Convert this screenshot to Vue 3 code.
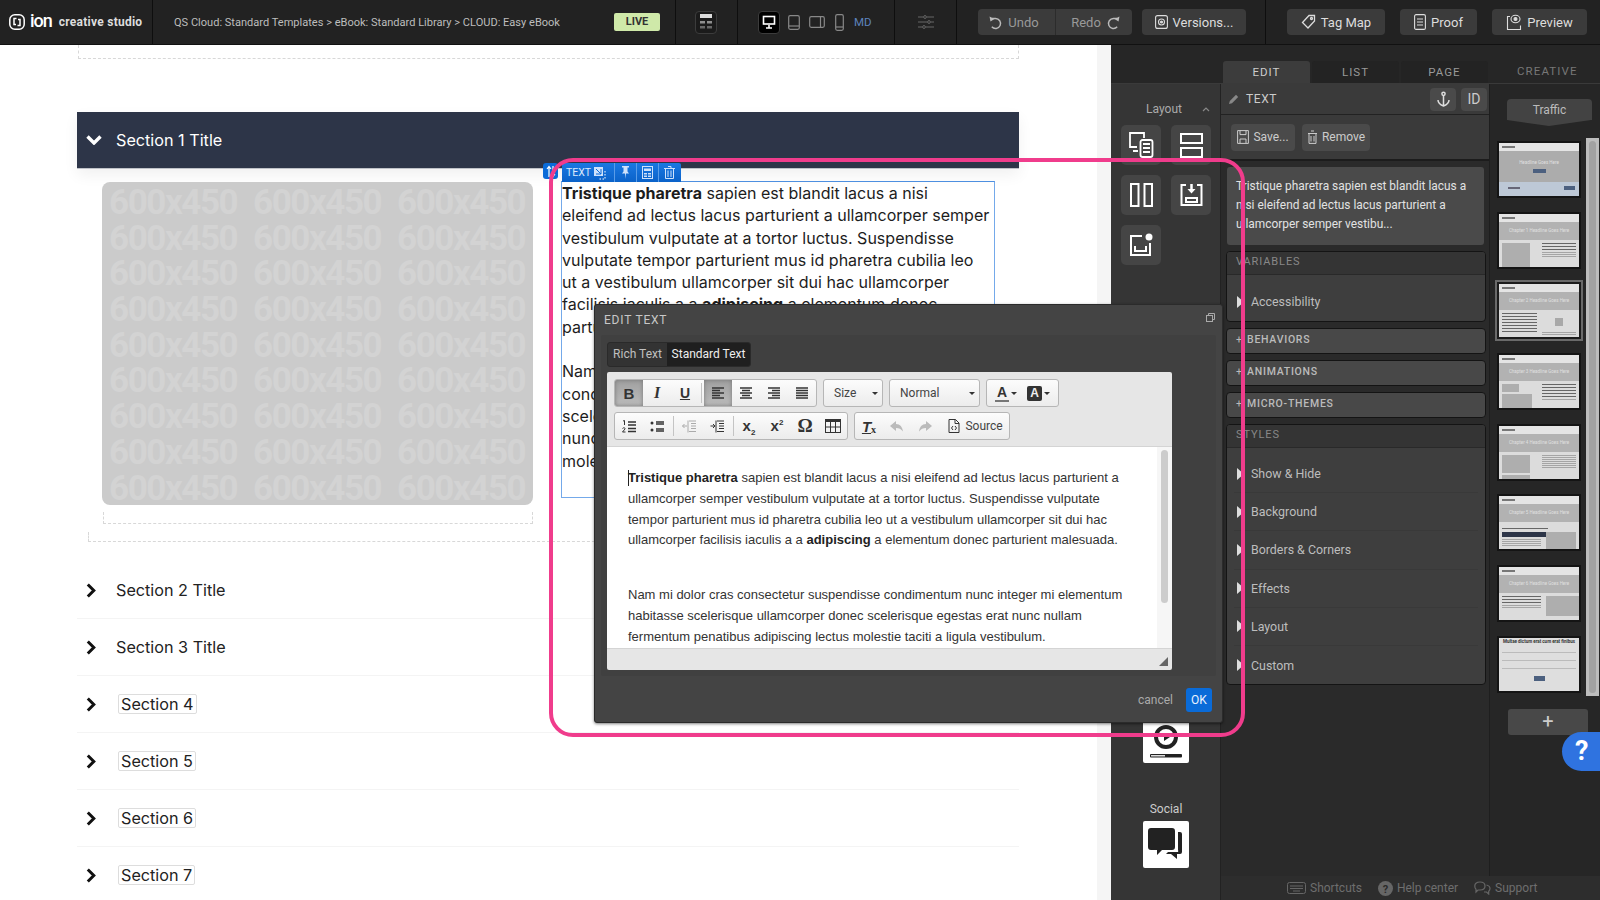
<script setup>
const sections = [
  { label: 'Section 2 Title', boxed: false },
  { label: 'Section 3 Title', boxed: false },
  { label: 'Section 4', boxed: true },
  { label: 'Section 5', boxed: true },
  { label: 'Section 6', boxed: true },
  { label: 'Section 7', boxed: true },
]
const watermarks = Array.from({ length: 27 }, (_, i) => i)
const collapsed = ['BEHAVIORS', 'ANIMATIONS', 'MICRO-THEMES']
const styleRows = ['Show & Hide', 'Background', 'Borders & Corners', 'Effects', 'Layout', 'Custom']
const thumbs = [
  { kind: 'cover', head: 'Headline Goes Here', left: [], right: [] },
  { kind: '', head: 'Chapter 1 Headline Goes Here', left: [{ t: 'img', w: 28, h: 24 }], right: [{ t: 'bold', n: 3 }, { t: 'line', n: 3 }] },
  { kind: 'sel', head: 'Chapter 2 Headline Goes Here', left: [{ t: 'bold', n: 7 }], right: [{ t: 'sq', w: 8, h: 8 }, { t: 'line', n: 2 }] },
  { kind: '', head: 'Chapter 3 Headline Goes Here', left: [{ t: 'img', w: 17, h: 8 }, { t: 'img', w: 30, h: 17 }], right: [{ t: 'bold', n: 5 }, { t: 'line', n: 1 }] },
  { kind: '', head: 'Chapter 4 Headline Goes Here', left: [{ t: 'img', w: 28, h: 18 }, { t: 'img', w: 28, h: 9 }], right: [{ t: 'line', n: 7 }] },
  { kind: 'wide', head: 'Chapter 5 Headline Goes Here', intro: true, left: [{ t: 'bar', w: 44, h: 5 }, { t: 'line', n: 4 }], right: [{ t: 'img', w: 30, h: 20 }] },
  { kind: 'wide', head: 'Chapter 6 Headline Goes Here', left: [{ t: 'bold', n: 3 }, { t: 'line', n: 2 }], right: [{ t: 'img', w: 36, h: 20 }] },
  { kind: 'form', head: '', left: [], right: [] },
]
const aligns = [
  { key: 'left', active: true, lines: [[1, 13], [1, 9], [1, 13], [1, 9], [1, 13]] },
  { key: 'center', active: false, lines: [[1, 13], [3, 11], [1, 13], [3, 11], [1, 13]] },
  { key: 'right', active: false, lines: [[1, 13], [5, 13], [1, 13], [5, 13], [1, 13]] },
  { key: 'justify', active: false, lines: [[1, 13], [1, 13], [1, 13], [1, 13], [1, 13]] },
]
const blockSize = (p) => ({ width: p.w + 'px', height: p.h + 'px' })
</script>

<template>
  <div class="app">
    <header class="topbar">
      <div class="brand">
        <svg class="logo" width="16" height="16" viewBox="0 0 16 16" fill="none" stroke="#fff" stroke-width="1.5"><rect x=".8" y=".8" width="14.4" height="14.400" rx="5"/><path d="M7.500 4.500H5v6h2M8.500 11.500H11v-6H9"/></svg>
        <span class="ion">ion</span>
        <span class="studio">creative studio</span>
      </div>
      <div class="crumbs">QS Cloud: Standard Templates &gt; eBook: Standard Library &gt; CLOUD: Easy eBook</div>
      <span class="live">LIVE</span>
      <div class="cell layout-cell">
        <span class="icon-box"><svg width="14" height="18" viewBox="0 0 14 18" fill="#ddd"><rect x="1" y="1" width="12" height="4"/><rect x="1" y="8" width="5" height="2.5" opacity=".6"/><rect x="8" y="8" width="5" height="2.5" opacity=".6"/><rect x="1" y="13" width="5" height="2.5" opacity=".4"/><rect x="8" y="13" width="5" height="2.5" opacity=".4"/></svg></span>
      </div>
      <div class="cell devices">
        <span class="icon-box black"><svg width="14" height="14" viewBox="0 0 14 14" fill="none" stroke="#fff" stroke-width="1.6"><rect x="1.500" y="1.500" width="11" height="7.500"/><path d="M7 10v2.500M4 13h6"/></svg></span>
        <svg class="dev t" width="12" height="15" viewBox="0 0 12 15" fill="none" stroke="#888" stroke-width="1.2"><rect x=".7" y=".7" width="10.6" height="13.6" rx="1.5"/><path d="M1 11h10" /></svg>
        <svg class="dev l" width="16" height="12" viewBox="0 0 16 12" fill="none" stroke="#888" stroke-width="1.2"><rect x=".7" y=".7" width="14.600" height="10.600" rx="1.5"/><path d="M11.500 1v10"/></svg>
        <svg class="dev p" width="9" height="17" viewBox="0 0 9 17" fill="none" stroke="#888" stroke-width="1.2"><rect x=".7" y=".7" width="7.6" height="15.6" rx="1.5"/><path d="M1 13h7"/></svg>
        <span class="md">MD</span>
      </div>
      <div class="cell sliders">
        <svg width="16" height="16" viewBox="0 0 16 16" fill="none" stroke="#666" stroke-width="1"><path d="M0 3h5M9 3h7M0 8h9M13 8h3M0 13h4M8 13h8"/><circle cx="7" cy="3" r="1.4"/><circle cx="11" cy="8" r="1.4"/><circle cx="6" cy="13" r="1.4"/></svg>
      </div>
      <div class="cell history">
        <div class="btn-group">
          <span class="tbtn dim undo"><svg width="15" height="15" viewBox="0 0 15 15" fill="none" stroke="#bbb" stroke-width="1.4"><path d="M4 3.5h3.5a5 5 0 1 1-3.700 8.300"/><path d="M1.500 1.500l1 5 4-2.500z" fill="#bbb" stroke="none"/></svg>Undo</span>
          <span class="tbtn dim redo">Redo<svg width="15" height="15" viewBox="0 0 15 15" fill="none" stroke="#bbb" stroke-width="1.4"><path d="M11 3.5H7.500a5 5 0 1 0 3.700 8.300"/><path d="M13.500 1.500l-1 5-4-2.500z" fill="#bbb" stroke="none"/></svg></span>
        </div>
        <span class="tbtn versions"><svg width="13" height="14" viewBox="0 0 13 14" fill="none" stroke="#ddd" stroke-width="1.1"><rect x=".6" y=".6" width="11.8" height="12.8" rx="2"/><circle cx="6.5" cy="7" r="3"/><circle cx="6.5" cy="7" r="1" fill="#ddd"/></svg>Versions...</span>
      </div>
      <div class="actions">
        <span class="tbtn tag"><svg width="15" height="16" viewBox="0 0 15 16" fill="none" stroke="#ddd" stroke-width="1.3"><path d="M8 1.500h5.500V7L7 14 1.500 8.500z"/><circle cx="10.500" cy="4.500" r="1"/></svg>Tag Map</span>
        <span class="tbtn proof"><svg width="12" height="16" viewBox="0 0 12 16" fill="none" stroke="#ddd" stroke-width="1.1"><rect x=".6" y=".6" width="10.8" height="14.8" rx="1.5"/><path d="M3 5h6M3 8h6M3 11h6"/></svg>Proof</span>
        <span class="tbtn preview"><svg width="16" height="17" viewBox="0 0 16 17" fill="none" stroke="#ddd" stroke-width="1.1"><path d="M4 2.500H1.500v13h13v-4"/><ellipse cx="9.500" cy="5" rx="4.500" ry="3.700"/><circle cx="9.500" cy="5" r="1.500" fill="#ddd"/></svg>Preview</span>
      </div>
    </header>

    <div class="workspace">
      <main class="canvas">
        <div class="dash-top"></div>
        <div class="acc-open">
          <svg width="16" height="10" viewBox="0 0 16 10" fill="none" stroke="#fff" stroke-width="3.4"><path d="M1.500 1.500L8 8l6.500-6.500"/></svg>
          <span>Section 1 Title</span>
        </div>
        <div class="acc-body">
          <div class="acc-cols">
            <div class="media-col">
              <div class="placeholder">
                <span v-for="n in watermarks" :key="n">600x450</span>
              </div>
              <div class="dash-tick"></div>
            </div>
            <div class="rich">
              <p><b>Tristique pharetra</b> sapien est blandit lacus a nisi eleifend ad lectus lacus parturient a ullamcorper semper vestibulum vulputate at a tortor luctus. Suspendisse vulputate tempor parturient mus id pharetra cubilia leo ut a vestibulum ullamcorper sit dui hac ullamcorper facilisis iaculis a a <b>adipiscing</b> a elementum donec parturient malesuada.</p>
              <p>Nam mi dolor cras consectetur suspendisse condimentum nunc integer mi elementum habitasse scelerisque ullamcorper donec scelerisque egestas erat nunc nullam fermentum penatibus adipiscing lectus molestie taciti a ligula vestibulum.</p>
            </div>
          </div>
          <div class="dash-wide"></div>
        </div>
        <div v-for="s in sections" :key="s.label" class="acc-row">
          <svg width="10" height="15" viewBox="0 0 10 15" fill="none" stroke="#111" stroke-width="3"><path d="M1.800 1.500l6 6-6 6"/></svg>
          <span :class="{ boxed: s.boxed }">{{ s.label }}</span>
        </div>
      </main>
      <div class="gutter"></div>

      <aside class="side">
        <nav class="tabs">
          <span class="tab on">EDIT</span>
          <span class="tab">LIST</span>
          <span class="tab">PAGE</span>
          <span class="tab-plain">CREATIVE</span>
        </nav>
        <div class="side-body">
          <div class="tools">
            <div class="tools-head"><span>Layout</span><svg width="8" height="5" viewBox="0 0 8 5" fill="none" stroke="#888" stroke-width="1.2"><path d="M1 4l3-3 3 3"/></svg></div>
            <div class="tool-grid">
              <span class="tool"><svg width="25" height="26" viewBox="0 0 25 26" fill="none" stroke="#fff" stroke-width="1.800"><path d="M15 6V1H1v14h7M4 19h5"/><rect x="11.500" y="8" width="12" height="17" rx="2"/><path d="M14 12h7M14 16h7M14 20h7" stroke-width="2.200"/></svg></span>
              <span class="tool"><svg width="23" height="25" viewBox="0 0 23 25" fill="none" stroke="#fff" stroke-width="2"><rect x="1" y="1" width="21" height="9"/><rect x="1" y="15" width="21" height="9"/></svg></span>
              <span class="tool"><svg width="23" height="24" viewBox="0 0 23 24" fill="none" stroke="#fff" stroke-width="2"><rect x="1" y="1" width="7.500" height="22"/><rect x="14.500" y="1" width="7.500" height="22"/></svg></span>
              <span class="tool"><svg width="23" height="24" viewBox="0 0 23 24" fill="none" stroke="#fff" stroke-width="2"><path d="M6 2H1.500v20h20V2H17"/><rect x="6" y="15" width="11" height="4"/><path d="M11.500 1v6" stroke-width="2.500"/><path d="M7.500 6l4 4.500 4-4.500z" fill="#fff" stroke="none"/></svg></span>
              <span class="tool"><svg width="24" height="24" viewBox="0 0 24 24" fill="none" stroke="#fff" stroke-width="2"><path d="M13 3H2v19h19V10"/><path d="M6 13v5h11v-5" /><circle cx="20" cy="4" r="3.500" fill="#fff" stroke="none"/></svg></span>
            </div>
            <div class="media-wrap">
              <span class="white-tool media"><svg width="36" height="44" viewBox="0 0 36 44" fill="none" stroke="#222"><circle cx="18" cy="19" r="10" stroke-width="4"/><path d="M16 15l6 4-6 4z" fill="#222" stroke="none"/><rect x="2" y="36" width="32" height="3.500" rx="1" fill="#222" stroke-width="0"/><rect x="3" y="37" width="14" height="1.500" fill="#ddd" stroke="none"/></svg></span>
              <span class="social-label">Social</span>
              <span class="white-tool"><svg width="36" height="36" viewBox="0 0 36 36" fill="#222"><path d="M3 1h21a3 3 0 0 1 3 3v16a3 3 0 0 1-3 3H14l-5 5v-5H3a3 3 0 0 1-3-3V4a3 3 0 0 1 3-3z"/><path d="M30 5h2a2 2 0 0 1 2 2v18a2 2 0 0 1-2 2h-3v5l-6-5h-5l2-2h10a2 2 0 0 0 0-2z"/></svg></span>
            </div>
          </div>

          <div class="rest">
            <div class="rest-main">
              <section class="edit">
                <div class="edit-head">
                  <svg width="12" height="12" viewBox="0 0 12 12" fill="#888"><path d="M1 11l.8-3L8 1.800 10.200 4 4 10.200z"/></svg>
                  <span class="edit-title">TEXT</span>
                  <span class="square"><svg width="13" height="16" viewBox="0 0 13 16" fill="none" stroke="#ddd" stroke-width="1.5"><circle cx="6.500" cy="2.800" r="1.600"/><path d="M6.500 4.500V15M1 9c0 3.500 3 5 5.500 6 2.500-1 5.500-2.500 5.500-6"/></svg></span>
                  <span class="square id">ID</span>
                </div>
                <div class="edit-actions">
                  <span class="small-btn save"><svg width="12" height="14" viewBox="0 0 12 14" fill="none" stroke="#ccc" stroke-width="1"><path d="M.6.6h10.800v12.800H.6z"/><path d="M3 .6v4h6v-4M3 13V9h6v4"/></svg>Save...</span>
                  <span class="small-btn remove"><svg width="11" height="14" viewBox="0 0 11 14" fill="none" stroke="#ccc" stroke-width="1"><path d="M1 3.500h9M2 3.500v9.900h7V3.500M4 1h3M4 6v5.500M7 6v5.500"/></svg>Remove</span>
                </div>
                <div class="excerpt">Tristique pharetra sapien est blandit lacus a nisi eleifend ad lectus lacus parturient a ullamcorper semper vestibu...</div>
                <div class="panel vars">
                  <div class="panel-head">VARIABLES</div>
                  <div class="row"><i></i>Accessibility</div>
                </div>
                <div v-for="c in collapsed" :key="c" class="collapsed"><b>+</b>{{ c }}</div>
                <div class="panel styles">
                  <div class="panel-head">STYLES</div>
                  <div v-for="r in styleRows" :key="r" class="row"><i></i>{{ r }}</div>
                </div>
              </section>

              <section class="pages">
                <div class="traffic">Traffic</div>
                <div class="thumb-area">
                  <div class="thumb-list">
                    <div v-for="(t, i) in thumbs" :key="i" class="thumb" :class="t.kind">
                      <div class="th-top"><s></s></div>
                      <div v-if="t.head" class="th-hero"><span>{{ t.head }}</span><em v-if="t.kind === 'cover'"></em></div>
                      <template v-if="t.kind === 'cover'">
                        <div class="th-band"><u></u><em></em></div>
                      </template>
                      <template v-else-if="t.kind === 'form'">
                        <div class="th-form">
                          <span class="form-title">Multae dictum erat cum erat finibus</span>
                          <u></u><u></u><u></u>
                          <em></em>
                        </div>
                      </template>
                      <template v-else>
                        <div v-if="t.intro" class="th-intro"></div>
                        <div class="th-body">
                          <div class="th-col">
                            <template v-for="(p, pi) in t.left" :key="pi">
                              <div v-if="p.n" class="th-lines" :class="p.t"><u v-for="k in p.n" :key="k"></u></div>
                              <div v-else class="th-block" :class="p.t" :style="blockSize(p)"></div>
                            </template>
                          </div>
                          <div class="th-col">
                            <template v-for="(p, pi) in t.right" :key="pi">
                              <div v-if="p.n" class="th-lines" :class="p.t"><u v-for="k in p.n" :key="k"></u></div>
                              <div v-else class="th-block" :class="p.t" :style="blockSize(p)"></div>
                            </template>
                          </div>
                        </div>
                      </template>
                    </div>
                  </div>
                  <div class="track"><span></span></div>
                </div>
                <div class="plus">+</div>
              </section>
            </div>
            <footer class="foot">
              <span><svg width="19" height="12" viewBox="0 0 19 12" fill="none" stroke="#666" stroke-width="1"><rect x=".5" y=".5" width="18" height="11" rx="2"/><path d="M3 4h13M3 6.500h13M6 9h7"/></svg>Shortcuts</span>
              <span><svg width="15" height="15" viewBox="0 0 15 15"><circle cx="7.500" cy="7.500" r="7.500" fill="#666"/><text x="7.500" y="11.500" text-anchor="middle" font-size="11" font-weight="700" fill="#2a2a2a" font-family="Roboto">?</text></svg>Help center</span>
              <span><svg width="17" height="14" viewBox="0 0 17 14" fill="none" stroke="#666" stroke-width="1.200"><path d="M6 1c3 0 5 1.600 5 4s-2 4-5 4H4L2 11V8.300C1 7.500.8 6.300.8 5 .8 2.600 3 1 6 1z"/><path d="M12.500 4c2 .5 3.500 1.800 3.500 3.500 0 1.200-.5 2-1.300 2.700V13l-2.200-2H10"/></svg>Support</span>
            </footer>
          </div>
        </div>
      </aside>
    </div>

    <!-- Element toolbar above the selected text block -->
    <div class="el-handle"><svg width="10" height="13" viewBox="0 0 10 13" fill="none" stroke="#fff" stroke-width="1.200"><path d="M3 12V2M1 4l2-2.500L5 4M7 1v10M5 9l2 2.500L9 9"/></svg></div>
    <div class="el-bar">
      <span class="el-name">TEXT <svg width="13" height="14" viewBox="0 0 13 14"><rect x="1" y="1" width="9" height="9" fill="#cfe2fb"/><path d="M3 3l5 5M8 3v5H3" stroke="#0a6bd8" fill="none"/><path d="M12 5v8H5" stroke="#fff" stroke-dasharray="1.500 1.500" fill="none"/></svg></span>
      <span class="el-ic"><svg width="9" height="13" viewBox="0 0 9 13" fill="#cfe2fb"><path d="M1 0h7v1.500H6.500v4L8 7.500H5L4.500 13 4 7.500H1l1.500-2v-4H1z"/></svg></span>
      <span class="el-ic"><svg width="11" height="13" viewBox="0 0 11 13"><rect x=".5" y=".5" width="10" height="12" fill="none" stroke="#cfe2fb"/><path d="M2 2.500h7v2.500H2zM2 7h3v1.500H2zM6 7h3v1.500H6zM2 9.500h3V11H2zM6 9.500h3V11H6z" fill="#cfe2fb"/></svg></span>
      <span class="el-ic"><svg width="11" height="13" viewBox="0 0 11 13" fill="none" stroke="#cfe2fb"><path d="M0 2.500h11M1.500 2.500v10h8v-10M4 .5h3v2M4 4.500v6.500M7 4.500v6.500"/></svg></span>
    </div>

    <!-- Edit text dialog -->
    <div class="modal">
      <div class="modal-head">
        <span>EDIT TEXT</span>
        <svg width="9" height="9" viewBox="0 0 9 9" fill="none" stroke="#aaa"><rect x=".5" y="2.500" width="6" height="6"/><path d="M2.500 2.500v-2h6v6h-2"/></svg>
      </div>
      <div class="modal-inner">
        <div class="mode-tabs"><span>Rich Text</span><span class="on">Standard Text</span></div>
        <div class="editor">
          <div class="toolbar">
            <div class="tb-row">
              <div class="tb-group">
                <span class="c pressed"><b>B</b></span>
                <span class="c"><b class="ital">I</b></span>
                <span class="c"><b class="und">U</b></span>
                <span class="sep"></span>
                <span v-for="a in aligns" :key="a.key" class="c" :class="{ pressed: a.active }">
                  <svg width="14" height="12" viewBox="0 0 14 12" stroke="#333" stroke-width="1.400"><line v-for="(l, i) in a.lines" :key="i" :x1="l[0]" :x2="l[1]" :y1="1 + i * 2.500" :y2="1 + i * 2.500"/></svg>
                </span>
              </div>
              <div class="tb-group combo size"><span>Size</span><i></i></div>
              <div class="tb-group combo normal"><span>Normal</span><i></i></div>
              <div class="tb-group colors">
                <span class="color-a"><b>A</b><i></i></span>
                <span class="color-b"><b>A</b><i></i></span>
              </div>
            </div>
            <div class="tb-row">
              <div class="tb-group">
                <span class="c"><svg width="14" height="13" viewBox="0 0 14 13" stroke="#333" stroke-width="1.400" fill="none"><path d="M6 2h8M6 5h8M6 8.500h8M6 11.500h8"/><path d="M1 1l1.500-.5V5M.5 8.500c.5-1 3-1 2.500.5L.5 12H3.500" stroke-width="1"/></svg></span>
                <span class="c"><svg width="14" height="13" viewBox="0 0 14 13" stroke="#333" stroke-width="1.500" fill="#333"><circle cx="2" cy="3" r="1.500" stroke="none"/><circle cx="2" cy="10" r="1.500" stroke="none"/><path d="M6 2h8M6 4h8M6 9h8M6 11h8" fill="none"/></svg></span>
                <span class="sep wide"></span>
                <span class="c"><svg width="14" height="13" viewBox="0 0 14 13" stroke="#aaa" fill="none"><path d="M7 1h7M9 3.500h5M9 6h5M9 8.500h5M7 11.500h7M6 .5v12M5 6H.5M2.500 4L.5 6l2 2"/></svg></span>
                <span class="c"><svg width="14" height="13" viewBox="0 0 14 13" stroke="#333" fill="none"><path d="M7 1h7M9 3.500h5M9 6h5M9 8.500h5M7 11.500h7M6 .5v12M.5 6H5M3 4l2 2-2 2"/></svg></span>
                <span class="sep wide"></span>
                <span class="c script"><span>x<sub>2</sub></span></span>
                <span class="c script"><span>x<sup>2</sup></span></span>
                <span class="c omega">&#937;</span>
                <span class="c"><svg width="16" height="14" viewBox="0 0 16 14"><rect x=".5" y=".5" width="15" height="13" fill="none" stroke="#333"/><rect y="0" width="16" height="3" fill="#333"/><path d="M5.500 3v10M10.500 3v10M0 8h16" stroke="#333"/></svg></span>
              </div>
              <div class="tb-group">
                <span class="c clear"><b>T</b><small>x</small></span>
                <span class="c"><svg width="14" height="11" viewBox="0 0 14 11" fill="#bbb"><path d="M6 0L0 5l6 5V7c3 0 5 1 7 3.500C12.500 6 10 3 6 3z"/></svg></span>
                <span class="c"><svg width="14" height="11" viewBox="0 0 14 11" fill="#bbb"><path d="M8 0l6 5-6 5V7C5 7 3 8 1 10.500 1.500 6 4 3 8 3z"/></svg></span>
                <span class="source"><svg width="12" height="14" viewBox="0 0 12 14" fill="none" stroke="#333"><path d="M1 .5h6.500L11 4v9.500H1z"/><path d="M7 .5V4.500h4M5 7L3.500 9 5 11M7 7l1.500 2L7 11"/></svg>Source</span>
              </div>
            </div>
          </div>
          <div class="doc">
            <div class="doc-text">
              <p><span class="caret"></span><b>Tristique pharetra</b> sapien est blandit lacus a nisi eleifend ad lectus lacus parturient a ullamcorper semper vestibulum vulputate at a tortor luctus. Suspendisse vulputate tempor parturient mus id pharetra cubilia leo ut a vestibulum ullamcorper sit dui hac ullamcorper facilisis iaculis a a <b>adipiscing</b> a elementum donec parturient malesuada.</p>
              <p>Nam mi dolor cras consectetur suspendisse condimentum nunc integer mi elementum habitasse scelerisque ullamcorper donec scelerisque egestas erat nunc nullam fermentum penatibus adipiscing lectus molestie taciti a ligula vestibulum.</p>
            </div>
            <div class="doc-scroll"><span></span></div>
          </div>
          <div class="statusbar"><i></i></div>
        </div>
      </div>
      <div class="modal-foot"><span class="cancel">cancel</span><span class="ok">OK</span></div>
    </div>

    <div class="callout"></div>
    <div class="help">?</div>
  </div>
</template>

<style>
html, body { margin: 0; background: #fff; }
</style>

<style scoped>
.app { position: relative; width: 1600px; height: 900px; overflow: hidden; display: flex; flex-direction: column; font-family: Roboto, "Liberation Sans", sans-serif; color: #222; background: #fff; }

/* top bar */
.topbar { flex: 0 0 45px; height: 45px; box-sizing: border-box; display: flex; align-items: center; background: #222; border-bottom: 1px solid #111; color: #ddd; }
.brand { width: 153px; height: 44px; box-sizing: border-box; padding-left: 9px; display: flex; align-items: center; border-right: 1px solid #0e0e0e; flex: none; color: #fff; }
.ion { font-size: 18px; font-weight: 500; margin-left: 5px; line-height: 20px; margin-top: -2px; letter-spacing: -1px; }
.studio { font-size: 12px; font-weight: 700; margin-left: 7px; color: #ddd; letter-spacing: .25px; }
.crumbs { flex: none; width: 441px; box-sizing: border-box; padding-left: 21px; font-size: 11.060px; color: #bdbdbd; white-space: nowrap; }
.live { flex: none; width: 46px; height: 18px; line-height: 18px; text-align: center; margin-left: 20px; font-size: 11px; font-weight: 700; color: #333; background: #cfe9a9; border-radius: 2px; }
.cell { height: 44px; display: flex; align-items: center; border-left: 1px solid #0e0e0e; box-sizing: border-box; flex: none; }
.layout-cell { margin-left: 15px; width: 62px; padding-left: 19px; }
.icon-box { width: 22px; height: 23px; display: flex; align-items: center; justify-content: center; border: 1px solid #3c3c3c; box-sizing: border-box; border-radius: 4px; background: #1b1b1b; }
.icon-box.black { background: #000; }
.devices { width: 157px; padding-left: 20px; }
.dev.t { margin-left: 8px; }
.dev.l { margin-left: 9px; }
.dev.p { margin-left: 10px; }
.md { margin-left: 10px; font-size: 11.500px; color: #5d82bd; }
.sliders { width: 62px; justify-content: center; }
.history { width: 309px; padding-left: 21px; gap: 10px; }
.btn-group { display: flex; }
.tbtn { display: flex; align-items: center; justify-content: center; gap: 5px; height: 26px; font-size: 13px; color: #ddd; background: #3b3b3b; border-radius: 4px; box-sizing: border-box; }
.tbtn.dim { color: #999; }
.undo { width: 78px; padding-right: 6px; border-radius: 4px 0 0 4px; border-right: 1px solid #2c2c2c; }
.redo { width: 76px; padding-left: 4px; border-radius: 0 4px 4px 0; }
.versions { width: 104px; font-size: 13px; }
.actions { flex: 1; height: 44px; display: flex; align-items: center; gap: 15px; padding-left: 21px; border-left: 1px solid #0e0e0e; box-sizing: border-box; }
.tag { width: 98px; }
.proof { width: 77px; }
.preview { width: 95px; }

/* canvas */
.workspace { flex: 1; min-height: 0; display: flex; }
.canvas { flex: 0 0 1097px; box-sizing: border-box; padding-left: 77px; padding-right: 78px; overflow: hidden; }
.gutter { flex: 0 0 14px; background: #f5f5f5; }
.dash-top { height: 14px; margin-left: 1px; box-sizing: border-box; border: 1px dashed #d8d8d8; border-top: 0; }
.acc-open { margin-top: 53px; height: 57px; box-sizing: border-box; display: flex; align-items: center; gap: 14px; padding-left: 9px; background: #2d3548; color: #fff; font-family: Inter, sans-serif; font-size: 16.200px; border-bottom: 1px solid #bfc2c8; box-shadow: 0 6px 14px rgba(0,0,0,.06); }
.acc-body { height: 393px; box-sizing: border-box; padding-top: 13px; }
.acc-cols { display: flex; height: 342px; padding-left: 25px; }
.media-col { flex: none; width: 431px; }
.placeholder { width: 431px; height: 323px; box-sizing: border-box; padding: 3px 0 0 7px; background: #cbcbcb; border-radius: 8px; display: grid; grid-template-columns: repeat(3, 144px); grid-template-rows: repeat(9, 35.700px); justify-items: start; align-items: center; align-content: start; }
.placeholder span { font: 700 35px/35.700px Roboto, sans-serif; color: #d3d3d3; letter-spacing: -1.440px; }
.dash-tick { margin: 7px 0 0 1px; height: 12px; box-sizing: border-box; border: 1px dashed #d8d8d8; border-top: 0; }
.dash-wide { margin: 8px 10px 0 11px; height: 10px; box-sizing: border-box; border: 1px dashed #d8d8d8; border-top: 0; }
.rich { flex: none; width: 434px; height: 317px; margin: -1px 0 0 28px; padding-right: 3px; box-sizing: border-box; border: 1px solid #74a9ea; border-top-color: #4d8fe0; overflow: hidden; font-family: Inter, sans-serif; font-size: 16.050px; line-height: 22.300px; color: #1d1d1d; }
.rich p { margin: 0 0 22.300px; }
.acc-row { height: 57px; box-sizing: border-box; display: flex; align-items: center; gap: 20px; padding-left: 9px; border-bottom: 1px solid #f4f4f4; font-family: Inter, sans-serif; font-size: 16.200px; color: #222; }
.acc-row span.boxed { box-sizing: border-box; margin-left: 2px; border: 1px solid #ddd; border-radius: 2px; padding: 0 2px; height: 20px; line-height: 18px; }

/* side */
.side { flex: 1; min-width: 0; display: flex; flex-direction: column; background: #2a2a2a; }
.tabs { flex: 0 0 38px; box-sizing: border-box; padding: 16px 0 0 112px; display: flex; gap: 2px; background: #262626; border-bottom: 1px solid #3a3a3a; }
.tab { width: 87px; height: 22px; line-height: 22px; text-align: center; font-size: 11.500px; letter-spacing: 1px; color: #999; background: #232323; border-radius: 3px 3px 0 0; }
.tab.on { background: #3c3c3c; color: #ccc; }
.tab-plain { margin-left: 27px; height: 22px; line-height: 20px; font-size: 11.500px; letter-spacing: 1.100px; color: #777; }
.side-body { flex: 1; min-height: 0; display: flex; }
.tools { flex: 0 0 110px; box-sizing: border-box; background: #353535; border-right: 1px solid #222; padding-top: 15px; display: flex; flex-direction: column; }
.tools-head { display: flex; justify-content: flex-end; align-items: center; gap: 20px; padding-right: 10px; font-size: 12px; line-height: 20px; color: #aaa; }
.tool-grid { margin-top: 6px; padding-left: 10px; display: grid; grid-template-columns: 40px 40px; column-gap: 10px; row-gap: 10px; }
.tool { height: 40px; display: flex; align-items: center; justify-content: center; background: #454545; border-radius: 5px; }
.media-wrap { margin-top: 451px; padding-left: 32px; width: 46px; display: flex; flex-direction: column; align-items: center; }
.white-tool { width: 46px; height: 47px; flex: none; display: flex; align-items: center; justify-content: center; background: #fff; border-radius: 2px; }
.social-label { margin: 39px 0 5px; font-size: 12px; line-height: 14px; color: #ccc; }
.rest { flex: 1; min-width: 0; display: flex; flex-direction: column; }
.rest-main { flex: 1; min-height: 0; display: flex; background: #262626; }
.foot { flex: 0 0 24px; display: flex; align-items: center; padding-left: 66px; gap: 16px; background: #2d2d2d; font-size: 12px; color: #6e6e6e; }
.foot span { display: flex; align-items: center; gap: 4px; }

.edit { flex: 0 0 268px; box-sizing: border-box; background: #2a2a2a; }
.edit-head { height: 31px; box-sizing: border-box; display: flex; align-items: center; padding: 0 2px 0 7px; background: #3a3a3a; border-bottom: 1px solid #222; }
.edit-title { flex: 1; margin-left: 6px; font-size: 12px; letter-spacing: .6px; color: #ccc; }
.square { width: 26px; height: 23px; display: flex; align-items: center; justify-content: center; margin-left: 5px; background: #4a4a4a; border-radius: 4px; color: #ccc; font-size: 14px; }
.edit-actions { height: 46px; box-sizing: border-box; display: flex; align-items: center; gap: 7px; padding-left: 10px; background: #3a3a3a; border-bottom: 2px solid #1c1c1c; }
.small-btn { height: 27px; display: flex; align-items: center; justify-content: center; gap: 4px; background: #4a4a4a; border-radius: 4px; font-size: 12px; color: #ccc; }
.save { width: 64px; }
.remove { width: 68px; }
.excerpt { margin: 6px 5px 0 6px; height: 78px; box-sizing: border-box; padding: 10px 8px 0 9px; background: #4a4a4a; border-radius: 3px; font-size: 11.900px; line-height: 19px; color: #e2e2e2; }
.panel { margin: 6px 3px 0 5px; box-sizing: border-box; background: #3e3e3e; border: 1px solid #141414; border-radius: 4px; overflow: hidden; }
.panel-head { height: 23px; line-height: 19px; box-sizing: border-box; padding-left: 9px; font-size: 11px; letter-spacing: .9px; color: #888; background: #343434; border-bottom: 1px solid #292929; }
.panel.vars .panel-head { margin-bottom: 7px; }
.panel.styles .panel-head { margin-bottom: 7px; }
.row { height: 38.200px; display: flex; align-items: center; margin: 0 7px; padding-left: 17px; position: relative; font-size: 12.400px; color: #bdbdbd; border-bottom: 1px solid #393939; box-sizing: border-box; }
.row:last-child { border-bottom: 0; }
.row i { position: absolute; left: 3px; top: 50%; margin-top: -6px; border-left: 7px solid #ddd; border-top: 6px solid transparent; border-bottom: 6px solid transparent; }
.vars .row { height: 39px; }
.collapsed { margin: 6px 3px 0 5px; height: 26px; box-sizing: border-box; border: 1px solid #141414; border-radius: 4px; background: #484848; line-height: 22px; padding-left: 9px; font-size: 10.500px; font-weight: 500; letter-spacing: .75px; color: #bbb; }
.collapsed b { display: inline-block; width: 11px; font-weight: 400; }

.pages { flex: 1; min-width: 0; position: relative; box-sizing: border-box; padding-top: 15px; background: #262626; border-left: 1px solid #1e1e1e; }
.traffic { margin-left: 17px; width: 85px; height: 21px; line-height: 23px; text-align: center; font-size: 12px; color: #bbb; background: #434343; border-radius: 4px 4px 0 0; position: relative; }
.traffic::after { content: ""; position: absolute; left: 0; top: 21px; border-left: 42.500px solid transparent; border-right: 42.500px solid transparent; border-top: 6px solid #434343; }
.thumb-area { margin-top: 18px; display: flex; }
.thumb-list { margin-left: 9px; width: 80px; padding-top: 5px; display: flex; flex-direction: column; gap: 17.700px; }
.thumb { width: 80px; height: 53px; flex: none; box-sizing: border-box; background: #dcdcdc; outline: 2px solid #141414; overflow: hidden; display: flex; flex-direction: column; }
.thumb.sel { outline: 2px solid #1c1c1c; box-shadow: 0 0 0 4px #6a6a6a; }
.th-top { flex: 0 0 8px; background: #e4e4e4; display: flex; align-items: center; padding-left: 3px; box-sizing: border-box; }
.th-top s { display: block; width: 13px; height: 2px; background: #777; text-decoration: none; }
.th-hero { flex: 0 0 18px; background: #b2b2b2; display: flex; flex-direction: column; align-items: center; justify-content: center; overflow: hidden; }
.th-hero span { font-size: 4.500px; line-height: 6px; color: #e0e0e0; white-space: nowrap; }
.th-hero em { display: block; width: 13px; height: 4px; margin-top: 3px; background: #4c607f; }
.cover .th-hero { flex: 0 0 31px; background: #acacac; }
.th-band { flex: 1; background: #bdc8d6; display: flex; align-items: flex-start; justify-content: space-between; padding: 4px 4px 0 9px; box-sizing: border-box; }
.th-band u { display: block; width: 12px; height: 2px; margin-top: 1px; background: #667; }
.th-band em { display: block; width: 11px; height: 4px; background: #4c607f; }
.th-body { flex: 1; display: flex; gap: 5px; padding: 3px 3px 0; min-height: 0; overflow: hidden; }
.th-col { flex: 1; display: flex; flex-direction: column; gap: 2px; min-width: 0; }
.th-block.img { background: #aeaeae; flex: none; }
.th-block.sq { background: #a8a8a8; align-self: center; margin: 5px 0 4px; flex: none; }
.th-block.bar { background: #2d3548; flex: none; }
.th-lines { display: flex; flex-direction: column; gap: 1px; }
.th-lines u { display: block; height: 1px; background: #a5a5a5; }
.th-lines.bold { gap: 2px; }
.th-lines.bold u { background: #666; height: 1px; }
.th-intro { flex: 0 0 4px; margin: 3px 3px 0; border-bottom: 1px solid #666; width: 46px; box-sizing: border-box; }
.wide .th-col:first-child { flex: 1.300; }
.form { background: #dedede; }
.form .th-top { display: none; }
.th-form { flex: 1; display: flex; flex-direction: column; align-items: center; padding: 1px 3px; gap: 6px; }
.form-title { font-size: 4.500px; line-height: 6px; font-weight: 700; color: #333; white-space: nowrap; }
.th-form u { display: block; width: 100%; height: 1px; background: #bbb; margin-top: 1px; }
.th-form em { display: block; width: 11px; height: 5px; margin-top: 1px; background: #4c607f; }
.track { margin-left: 7px; flex: 0 0 13px; height: 558px; box-sizing: border-box; padding: 3px 3px 3px 3px; background: #bdbdbd; }
.track span { display: block; height: 100%; background: #a2a2a2; border-radius: 4px; }
.plus { margin: 13px 0 0 18px; width: 80px; height: 26px; line-height: 24px; text-align: center; font-size: 20px; color: #ccc; background: #484848; border-radius: 3px; }

/* element toolbar */
.el-handle { position: absolute; left: 543px; top: 163px; width: 15px; height: 16px; display: flex; align-items: center; justify-content: center; background: #0a6bd8; border-radius: 3px; }
.el-bar { position: absolute; left: 562px; top: 163px; width: 119px; height: 19px; display: flex; align-items: center; background: linear-gradient(#1b78e2, #0a62c9); color: #dbe9fb; font-size: 10.500px; border-radius: 2px 2px 0 0; }
.el-name { width: 52px; box-sizing: border-box; padding-left: 4px; display: flex; align-items: center; gap: 2px; height: 19px; }
.el-ic { width: 22px; height: 19px; display: flex; align-items: center; justify-content: center; border-left: 1px solid #5a9ce8; box-sizing: border-box; }

/* modal */
.modal { position: absolute; left: 594px; top: 304px; width: 629px; height: 419px; box-sizing: border-box; display: flex; flex-direction: column; background: #444; border: 1px solid #2b2b2b; border-radius: 3px; box-shadow: 0 1px 3px rgba(0,0,0,.5); }
.modal-head { height: 30px; display: flex; align-items: center; justify-content: space-between; padding: 0 7px 0 9px; font-size: 12px; letter-spacing: .8px; color: #c8c8c8; }
.modal-head svg { margin-top: -5px; }
.modal-inner { margin: 0 6px; height: 341px; box-sizing: border-box; padding: 7px 6px 0; background: #404040; border-radius: 2px; }
.mode-tabs { width: 144px; height: 25px; display: flex; font-size: 12px; line-height: 23px; border: 1px solid #2a2a2a; box-sizing: border-box; border-radius: 3px; background: #333; color: #c0c0c0; overflow: hidden; white-space: nowrap; }
.mode-tabs span { flex: 0 0 59px; box-sizing: border-box; text-align: center; }
.mode-tabs .on { flex: 1; background: #1f1f1f; color: #eee; }
.editor { margin-top: 5px; width: 565px; height: 298px; display: flex; flex-direction: column; background: #e6e6e6; border-radius: 2px; overflow: hidden; }
.toolbar { height: 75px; box-sizing: border-box; padding: 7px 7px 0; border-bottom: 1px solid #d4d4d4; display: flex; flex-direction: column; gap: 5px; }
.tb-row { display: flex; gap: 6px; height: 28px; }
.tb-group { display: flex; height: 28px; box-sizing: border-box; border: 1px solid #b6b6b6; border-radius: 3px; background: linear-gradient(#fcfcfc, #ececec); align-items: center; overflow: hidden; color: #333; }
.c { width: 28px; height: 26px; flex: none; display: flex; align-items: center; justify-content: center; font-size: 14px; }
.c.pressed { background: linear-gradient(#a0a0a0, #bcbcbc); box-shadow: inset 0 0 4px #777; }
.c b { font-family: "Liberation Serif", serif; font-size: 16px; }
.c:first-child b { font-family: "Liberation Sans", sans-serif; font-size: 15px; }
.c b.ital { font-family: "Liberation Serif", serif; font-style: italic; }
.c b.und { font-family: "Liberation Sans", sans-serif; font-size: 14px; text-decoration: underline; }
.sep { width: 1px; height: 20px; margin: 0 2px; background: #c4c4c4; flex: none; }
.sep.wide { margin: 0 1.500px; }
.tb-group.combo { justify-content: space-between; padding: 0 4px 0 10px; font-size: 12px; color: #444; }
.combo i, .color-a i, .color-b i { display: block; border-top: 3px solid #333; border-left: 3px solid transparent; border-right: 3px solid transparent; }
.size { width: 60px; }
.normal { width: 91px; }
.colors { width: 73px; justify-content: space-around; padding: 0 3px; }
.color-a, .color-b { display: flex; align-items: center; gap: 2px; }
.color-a b { font: 700 14px/15px "Liberation Sans", sans-serif; border-bottom: 2px solid #777; padding: 0 2px; }
.color-b b { font: 700 12px/15px "Liberation Sans", sans-serif; color: #eee; background: #333; padding: 0 3px; border-radius: 2px; }
.script { font: 700 15px/16px "Liberation Sans", sans-serif; }
.script sub, .script sup { font-size: 8px; line-height: 0; }
.omega { font: 700 19px "Liberation Serif", serif; }
.clear { font-family: "Liberation Serif", serif; }
.clear b { font-style: italic; text-decoration: underline; font-size: 16px; }
.clear small { font-size: 10px; font-weight: 700; margin-top: 7px; }
.source { width: 70px; height: 26px; box-sizing: border-box; padding-left: 3px; display: flex; align-items: center; justify-content: center; gap: 5px; font-size: 12px; color: #444; }
.doc { flex: 0 0 201px; display: flex; background: #fff; overflow: hidden; }
.doc-text { flex: 1; box-sizing: border-box; padding: 21px 22px 0 21px; font: 13px/20.750px "Liberation Sans", sans-serif; color: #333; }
.doc-text p { margin: 0 0 34px; position: relative; }
.doc-text b { color: #222; }
.caret { position: absolute; left: 0; top: 2px; height: 16px; width: 1px; background: #222; }
.doc-scroll { flex: 0 0 15px; box-sizing: border-box; padding: 3px 4px; background: #f6f6f6; }
.doc-scroll span { display: block; height: 153px; background: #ccc; border-radius: 4px; }
.statusbar { flex: 1; position: relative; border-top: 1px solid #d4d4d4; box-sizing: border-box; }
.statusbar i { position: absolute; right: 4px; bottom: 4px; border-bottom: 9px solid #666; border-left: 9px solid transparent; }
.modal-foot { flex: 1; display: flex; align-items: center; justify-content: flex-end; padding: 2px 10px 0 0; gap: 13px; }
.cancel { font-size: 12px; color: #aaa; }
.ok { width: 26px; height: 24px; line-height: 24px; text-align: center; background: #0a6bd8; border-radius: 3px; font-size: 12px; color: #eaf2ff; }

.callout { position: absolute; left: 549px; top: 158px; width: 696px; height: 579px; box-sizing: border-box; border: 4px solid #f03c8c; border-radius: 24px; pointer-events: none; }
.help { position: absolute; left: 1562px; top: 732px; width: 60px; height: 39px; padding-left: 13px; box-sizing: border-box; border-radius: 20px; background: #2f73e0; color: #fff; font: 700 27px/39px Roboto, sans-serif; }
</style>
